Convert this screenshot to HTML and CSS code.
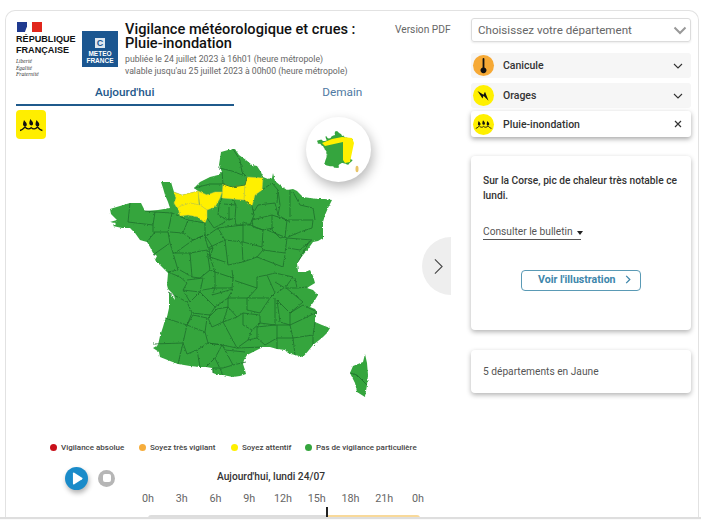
FILE: index.html
```html
<!DOCTYPE html>
<html lang="fr">
<head>
<meta charset="utf-8">
<title>Vigilance météorologique et crues</title>
<link rel="stylesheet" href="styles.css">
</head>
<body>
<svg class="defs" width="0" height="0" aria-hidden="true">
  <defs>
    <symbol id="ico-rain" viewBox="0 0 30 30">
      <path d="M8 10c1.800 2.200 2.800 3.200 2.800 4.400a1.900 1.900 0 0 1-3.800 .2c0-1.200.4-2.600 1-4.600zM14.300 9c1.800 2.200 2.800 3.200 2.800 4.400a1.900 1.900 0 0 1-3.800 .2c0-1.200.4-2.600 1-4.600zM20.500 10c1.800 2.200 2.800 3.200 2.800 4.400a1.900 1.900 0 0 1-3.800 .2c0-1.200.4-2.600 1-4.600z" fill="#111"/>
      <path d="M4 20.500c2.500-.5 4-2.500 5-3.500 2 2.500 4.500 2.500 6.200.6 1.800 2 4.300 1.800 6.200-.6 1 1.200 2.600 3 5 3.500" fill="none" stroke="#111" stroke-width="1.300"/>
    </symbol>
    <filter id="rough" x="-5%" y="-5%" width="110%" height="110%">
      <feTurbulence type="fractalNoise" baseFrequency="0.55" numOctaves="2" seed="4"/>
      <feDisplacementMap in="SourceGraphic" scale="2.4" xChannelSelector="R" yChannelSelector="G"/>
    </filter>
    <path id="fr" d="M221 152 228 150 235 149 239 155 246 160 252 165 257 166 261 172 263 177 268 179 272 178 273 173 275 181 281 186 287 190 293 189 297 191 303 197 310 198 318 199 325 199 332 200 328 208 325 215 323 222 323 232 323 238 318 241 313 242 308 249 303 255 297 263 298 272 305 272 310 270 313 276 315 283 310 286 307 288 313 290 318 295 315 300 310 307 315 309 317 312 315 318 315 322 322 325 330 328 327 333 323 337 318 341 313 345 309 350 303 357 295 355 288 353 285 350 277 349 270 347 263 347 255 351 247 355 244 360 243 364 245 370 246 374 240 376 233 377 228 376 223 375 218 375 213 373 212 368 206 367 200 367 190 366 178 364 170 361 160 357 159 352 153 348 158 345 160 336 163 327 165 320 167 317 169 308 169 292 175 300 174 295 168 289 167 285 168 273 160 265 155 260 157 256 153 253 150 247 147 242 140 240 135 233 130 228 122 228 113 226 116 223 110 222 117 220 111 214 110 209 120 206 130 203 141 203 145 211 158 210 170 208 168 202 165 195 163 188 161 182 171 182 174 192 182 195 190 193 198 191 194 188 200 182 210 177 218 175 222 172 219 165Z"/>
  </defs>
</svg>

<div class="card">
  <main class="left">
    <header class="head">
      <div class="rf">
        <svg class="rf-flag" viewBox="0 0 25 10" width="25" height="10"><rect width="10" height="10" fill="#1f3a8f"/><rect x="15" width="10" height="10" fill="#e1261c"/><path d="M8 10c1-3 2-7 5-8 2 1 2 3 1 4l1 4z" fill="#fff"/></svg>
        <div class="rf-name">RÉPUBLIQUE<br>FRANÇAISE</div>
        <div class="rf-motto">Liberté<br>Égalité<br>Fraternité</div>
      </div>
      <div class="mf">
        <span class="mf-mark">C</span>
        <span class="mf-name">METEO<br>FRANCE</span>
      </div>
      <div class="titles">
        <h1>Vigilance météorologique et crues :<br>Pluie-inondation</h1>
        <p>publiée le 24 juillet 2023 à 16h01 (heure métropole)<br>valable jusqu'au 25 juillet 2023 à 00h00 (heure métropole)</p>
      </div>
      <a class="pdf">Version PDF</a>
    </header>

    <nav class="tabs">
      <a class="tab tab-on">Aujourd'hui</a>
      <a class="tab">Demain</a>
    </nav>

    <div class="filter-ico"><svg width="30" height="30"><use href="#ico-rain"/></svg></div>

    <section class="stage">
      <svg class="map" viewBox="16 139 435 297" width="435" height="297">
        <g filter="url(#rough)">
          <use href="#fr" class="land"/>
          <path class="land" d="M365 354 367 363 368 375 367 385 365 397 357 392 355 383 350 373 353 366 363 362Z"/>
          <path class="yel" d="M174 192 182 195 190 193 198 191 199 205 190 203 182 206 177 208 174 203 176 198Z"/>
          <path class="yel" d="M198 191 207 195 215 192 222 192 220 198 215 207 207 210 200 205Z"/>
          <path class="yel" d="M178 207 190 203 200 205 207 210 207 218 205 223 198 217 188 215 180 216Z"/>
          <path class="yel" d="M223 184 232 187 245 185 244 200 233 199 222 198Z"/>
          <path class="yel" d="M247 177 263 178 262 190 255 195 252 206 247 203 244 200 245 185Z"/>
          <path class="bnd" d="M233 149 240 160 242 172 246 176M219 168 232 171 245 176M222 172 223 184M194 188 210 184 223 184M223 184 232 187 245 185 247 177M222 198 219 205 218 215 224 218 229 220 235 218 236 205 233 199M224 204 236 205M229 207 229 220M244 200 252 206 254 215 250 225 236 225 235 218M207 218 214 228 225 222 224 218M252 215 258 205 275 203 278 215M262 190 272 183 278 190 277 203M278 190 280 205 278 215 290 222M290 190 290 217M293 192 300 205 313 208 315 220M288 220 313 220M312 228 313 220M312 228 300 232 288 237M272 215 287 220 285 237 280 238 272 230 272 215M252 220 272 215M273 228 263 230 253 227 252 220M243 222 263 230M263 230 262 247 243 242 243 222M218 228 243 225M243 242 225 240 218 228M267 230 287 238 285 253 263 250 262 247M287 238 312 240 300 250 288 248M310 240 298 262M263 250 257 257 243 262 242 242M285 255 283 267 257 257M243 262 228 265 225 240M205 237 218 228M225 240 208 248 205 237M209 248 210 257 228 263"/>
          <path class="bnd" d="M130 203 128 222M128 222 153 225 155 212 145 211M155 212 172 213M172 213 168 232 153 232 153 225M155 232 147 242M168 232 170 243 153 255M172 213 188 220 183 233 170 232M188 220 205 223 205 235 193 240 183 233M170 243 173 253 175 253 193 240M173 253 178 270 168 272M175 253 190 253 192 277 180 270M190 253 207 250 210 270 200 278 192 277M193 240 205 235 213 248 207 250M213 248 210 257M210 257 215 272 210 270"/>
          <path class="bnd" d="M168 272 180 277 187 283 183 290 190 302M168 292 187 302 192 313 187 325 165 318M190 302 200 292 215 307 210 315 192 313M187 280 203 278 200 292 183 290M215 272 233 278 232 288 215 288 215 272M202 290 215 288 212 295 233 289 228 298 215 307M233 280 257 288 248 298 228 298M233 278 232 270M257 277 267 275 275 293 270 298 248 298M257 277 257 288M267 275 275 273 293 277 285 288 275 282M277 293 285 287 303 302 290 313 277 300M295 278 297 288 307 287M285 288 297 288M228 298 228 307 237 317 223 322M247 298 247 310 260 313 270 298M275 298 275 325 260 323 260 315M277 300 280 322 290 325 290 313M290 313 303 305 317 312 305 318 290 325M293 338 290 325M315 322 313 335 293 338 295 355M313 335 313 345M275 325 290 325M277 325 277 338 293 338M277 338 277 349M260 323 257 327 275 325M257 327 257 338 265 345 277 338M243 313 260 315M243 313 237 317M252 330 260 323M243 313 243 325 252 330 248 340 257 338M237 348 248 340M237 348 263 347M208 318 217 309 228 307 223 322 212 327 208 318M187 325 193 315 207 318 205 332 187 325M183 343 187 325M183 343 153 344M183 343 187 354 197 350 208 343 205 332 203 333M223 322 237 348 222 345 208 343M197 350 200 367M183 343 178 364M208 343 222 345 215 358 206 367M222 345 225 350 245 352M215 358 223 375M225 350 233 365 223 368M233 365 246 362M213 373 213 368 223 368"/>
          <path class="bnd" d="M350 373 357 375 367 385"/>
        </g>
      </svg>
      <div class="mini">
        <svg viewBox="306 117 65 65" width="65" height="65">
          <use href="#fr" class="mini-grn" transform="translate(299.2 106.9) scale(.162)"/>
          <path class="mini-yel" d="M322 143 332 139 342 137 352 138 354 143 350 162 345 163 343 160 343 142 325 146Z"/>
          <ellipse cx="357" cy="169" rx="1.500" ry="3.200" fill="#e8c467"/>
        </svg>
      </div>
      <div class="next">
        <svg viewBox="0 0 10 18" width="9" height="17"><path d="M1 1l8 8-8 8" fill="none" stroke="#444" stroke-width="1.200"/></svg>
      </div>
    </section>

    <ul class="legend">
      <li class="lg lg-1"><i class="dot dot-red"></i>Vigilance absolue</li>
      <li class="lg lg-2"><i class="dot dot-org"></i>Soyez très vigilant</li>
      <li class="lg lg-3"><i class="dot dot-yel"></i>Soyez attentif</li>
      <li class="lg lg-4"><i class="dot dot-grn"></i>Pas de vigilance particulière</li>
    </ul>

    <section class="player">
      <div class="ctrl">
        <button class="play" aria-label="Lecture"><svg viewBox="0 0 12 14" width="11" height="13"><path d="M1 1.500v11a1 1 0 0 0 1.500.8l8.500-5.500a1 1 0 0 0 0-1.600L2.500.700A1 1 0 0 0 1 1.500z" fill="#fff"/></svg></button>
        <button class="stop" aria-label="Arrêt"><i></i></button>
      </div>
      <div class="time">
        <div class="time-title">Aujourd'hui, lundi 24/07</div>
        <div class="hours"><span>0h</span><span>3h</span><span>6h</span><span>9h</span><span>12h</span><span>15h</span><span>18h</span><span>21h</span><span>0h</span></div>
        <div class="bar"><i class="bar-past"></i><i class="bar-rest"></i><b class="bar-now"></b></div>
      </div>
    </section>
  </main>

  <aside class="right">
    <div class="select">Choisissez votre département
      <svg viewBox="0 0 14 9" width="14" height="9"><path d="M1.500 1.500 7 7l5.500-5.500" fill="none" stroke="#999" stroke-width="2"/></svg>
    </div>
    <div class="acc">
      <span class="acc-ico ico-org"><svg viewBox="0 0 21 21" width="21" height="21"><path d="M9.600 4a.9.9 0 0 1 1.800 0v8.400a3 3 0 1 1-1.800 0z" fill="#111"/></svg></span>
      <span class="acc-name">Canicule</span>
      <svg class="acc-chev" viewBox="0 0 10 6" width="10" height="6"><path d="M1 1l4 4 4-4" fill="none" stroke="#333" stroke-width="1.100"/></svg>
    </div>
    <div class="acc">
      <span class="acc-ico ico-yel"><svg viewBox="0 0 21 21" width="21" height="21"><path d="M4.500 6l6 3.800 1.500-3 3.500 9-5-5-1 2.800z" fill="#111"/></svg></span>
      <span class="acc-name">Orages</span>
      <svg class="acc-chev" viewBox="0 0 10 6" width="10" height="6"><path d="M1 1l4 4 4-4" fill="none" stroke="#333" stroke-width="1.100"/></svg>
    </div>
    <div class="acc acc-open">
      <span class="acc-ico ico-yel"><svg width="21" height="21"><use href="#ico-rain"/></svg></span>
      <span class="acc-name">Pluie-inondation</span>
      <svg class="acc-close" viewBox="0 0 8 8" width="8" height="8"><path d="M1 1l6 6M7 1 1 7" stroke="#333" stroke-width="1.200"/></svg>
    </div>

    <article class="panel panel-main">
      <p class="lead">Sur la Corse, pic de chaleur très notable ce lundi.</p>
      <div class="bulletin">Consulter le bulletin<i class="caret"></i></div>
      <a class="btn">Voir l'illustration
        <svg viewBox="0 0 6 10" width="6" height="9"><path d="M1 1l4 4-4 4" fill="none" stroke="#3e86ab" stroke-width="1.400"/></svg>
      </a>
    </article>
    <article class="panel panel-sum">5 départements en Jaune</article>
  </aside>
</div>
<div class="fold"></div>
</body>
</html>
```

FILE: styles.css
```css
* { box-sizing: border-box; }
html, body { margin: 0; padding: 0; height: 520px; overflow: hidden; background: #fff; }
body { font-family: Roboto, "Liberation Sans", sans-serif; color: #333; }
.defs { position: absolute; }

.card {
  display: flex;
  height: 507px;
  margin: 10px 2px 0 5px;
  border: 1px solid #e2e2e2;
  border-bottom: 0;
  border-radius: 10px 10px 0 0;
  overflow: hidden;
}
.fold { height: 3px; background: #fafafa; border-top: 2px solid #dedede; }

/* Left column */
.left { width: 445px; padding: 11px 0 0 10px; flex: none; }
.head { display: flex; height: 57px; align-items: flex-start; }
.rf { width: 66px; flex: none; }
.rf-flag { display: block; margin-left: 1px; }
.rf-name { margin-top: 2px; font: bold 9.1px/11px "Liberation Sans", sans-serif; color: #111; }
.rf-motto { margin-top: 2px; font: italic 5.5px/6.5px "Liberation Serif", serif; color: #333; }
.mf { width: 36px; height: 36px; margin-top: 9px; flex: none; background: #1b5690; display: flex; flex-direction: column; align-items: center; color: #fff; }
.mf-mark { width: 10px; height: 10px; margin-top: 7px; background: #dfe8f0; color: #1b5690; font: bold 9px/10px "Liberation Sans", sans-serif; text-align: center; }
.mf-name { margin-top: 3px; font: bold 6.5px/6.5px "Liberation Sans", sans-serif; text-align: center; }
.titles { width: 260px; margin: 0 0 0 7px; flex: none; }
.titles h1 { margin: 0; font-size: 14.6px; line-height: 14px; font-weight: 500; color: #111; }
.titles p { margin: 3px 0 0; font-size: 8.7px; line-height: 12px; color: #666; }
.pdf { margin: 1px 0 0 10px; font-size: 10.2px; line-height: 14px; color: #666; white-space: nowrap; }

.tabs { display: flex; width: 435px; height: 25px; margin-top: 2px; }
.tab { flex: 1; text-align: center; padding-top: 3px; font-size: 11.8px; line-height: 16px; color: #4f7aa3; }
.tab-on { color: #1f5a8c; font-weight: 500; border-bottom: 2px solid #1f5a8c; }

.filter-ico { width: 30px; height: 29px; margin-top: 4px; background: #ffee00; border-radius: 4px; }
.filter-ico svg { display: block; }

.stage { position: relative; width: 435px; height: 297px; }
.map { display: block; }
.land { fill: #35a53e; }
.yel { fill: #fff000; stroke: #c9c94a; stroke-width: .5; }
.bnd { fill: none; stroke: #1e6f2b; stroke-width: .8; stroke-linejoin: round; }
.mini { position: absolute; left: 290px; top: -22px; width: 65px; height: 65px; border-radius: 50%; background: #fff; box-shadow: 2px 5px 12px rgba(0,0,0,.28); }
.mini svg { display: block; }
.mini-yel { fill: #fff000; }
.mini-grn { fill: #35a53e; }
.next { position: absolute; right: 0; top: 98px; width: 29px; height: 58px; border-radius: 29px 0 0 29px; background: #eeeeee; display: flex; align-items: center; justify-content: center; padding-left: 3px; }

.legend { display: flex; list-style: none; margin: 5px 0 0; padding: 0 0 0 34px; height: 13px; }
.lg { display: flex; align-items: center; font-size: 8px; font-weight: 500; line-height: 13px; color: #444; white-space: nowrap; }
.lg-1 { width: 89px; }
.lg-2 { width: 92px; }
.lg-3 { width: 74px; }
.dot { width: 7px; height: 7px; margin-right: 4px; border-radius: 50%; }
.dot-red { background: #c8101a; }
.dot-org { background: #f6ad3c; }
.dot-yel { background: #fff000; }
.dot-grn { background: #35a53e; }

.player { display: flex; margin-top: 15px; }
.ctrl { display: flex; align-items: center; width: 110px; height: 24px; padding-left: 49px; margin-top: -3px; flex: none; }
.ctrl button { padding: 0; border: 0; border-radius: 50%; display: flex; align-items: center; justify-content: center; }
.play { width: 23px; height: 23px; flex: none; background: #1a8bc9; box-shadow: 1px 3px 5px rgba(0,0,0,.3); padding-left: 2px !important; }
.stop { width: 17px; height: 17px; flex: none; margin-left: 10px; background: #b6b6b6; }
.stop i { display: block; width: 8px; height: 8px; border-radius: 2px; background: #fff; }
.time { width: 310px; flex: none; }
.time-title { height: 15px; padding-left: 91px; font-size: 10.2px; line-height: 15px; font-weight: 500; color: #333; white-space: nowrap; }
.hours { display: flex; justify-content: space-between; margin: 8px 0 0 12px; width: 290px; font-size: 10.8px; line-height: 14px; color: #666; }
.hours span { width: 20px; text-align: center; }
.bar { display: flex; position: relative; width: 272px; height: 3px; margin: 9px 0 0 22px; }
.bar-past { width: 179px; background: #dddddd; border-radius: 3px 0 0 0; }
.bar-rest { flex: 1; background: #f8d99a; border-radius: 0 3px 0 0; }
.bar-now { position: absolute; left: 178px; top: -8px; width: 2px; height: 11px; background: #222; }

/* Right column */
.right { width: 220px; margin-left: 20px; padding-top: 7px; flex: none; }
.select { display: flex; align-items: center; justify-content: space-between; height: 24px; padding: 0 3px 0 6px; border: 1px solid #dcdcdc; border-radius: 3px; font-size: 11.6px; color: #666; box-shadow: 0 1px 2px rgba(0,0,0,.08); }
.acc { display: flex; align-items: center; height: 25px; margin-top: 5px; padding-left: 2px; background: #f6f6f6; border-radius: 3px; }
.select + .acc { margin-top: 11px; }
.acc-ico { width: 21px; height: 21px; border-radius: 50%; flex: none; display: block; }
.acc-ico svg { display: block; }
.ico-org { background: #f6a935; }
.ico-yel { background: #fff000; }
.acc-name { margin-left: 9px; font-size: 10.5px; font-weight: 500; color: #333; flex: 1; }
.acc-chev { margin-right: 8px; }
.acc-close { margin-right: 9px; }
.acc-open { height: 26px; margin-top: 3px; background: #fff; box-shadow: 0 2px 5px rgba(0,0,0,.35); }

.panel { background: #fff; border-radius: 4px; box-shadow: 0 2px 5px rgba(0,0,0,.3); }
.panel-main { height: 174px; margin-top: 19px; padding: 17px 12px 0; }
.lead { margin: 0; font-size: 10.2px; line-height: 15px; font-weight: 500; color: #333; }
.bulletin { display: flex; align-items: center; width: 98px; height: 16px; margin-top: 21px; border-bottom: 1px solid #555; font-size: 10.2px; color: #555; white-space: nowrap; }
.caret { margin: 2px 0 0 4px; border: 3px solid transparent; border-top: 4px solid #222; border-bottom: 0; }
.btn { display: flex; align-items: center; justify-content: space-between; width: 120px; height: 21px; margin: 30px 0 0 38px; padding: 0 9px 2px 16px; border: 1px solid #5a9ab5; border-radius: 4px; font-size: 10.6px; font-weight: 700; color: #3e86ab; white-space: nowrap; }
.panel-sum { height: 43px; margin-top: 20px; padding: 15px 12px 0; font-size: 10.2px; line-height: 13px; color: #555; }
```
